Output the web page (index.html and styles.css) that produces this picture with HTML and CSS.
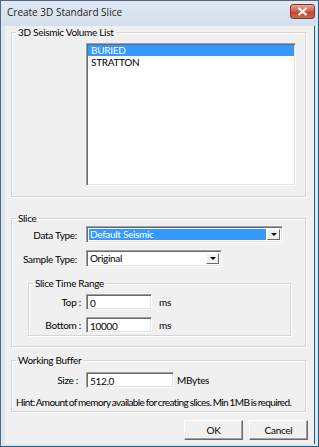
FILE: index.html
```html
<!DOCTYPE html>
<html lang="en">
<head>
  <meta charset="UTF-8" />
  <title>Create 3D Standard Slice</title>
  <link rel="stylesheet" href="styles.css">
</head>
<body>
  <div class="window">
    <div class="titlebar">
      <span class="title">Create 3D Standard Slice</span>
      <span class="close">
        <svg width="11" height="9" viewBox="0 0 11 9"><path d="M1.5 1 L9.5 8 M9.5 1 L1.5 8" stroke="#fff" stroke-width="2.2"/></svg>
      </span>
    </div>
    <div class="client">
      <fieldset class="group list-group">
        <legend>3D Seismic Volume List</legend>
        <ul class="listbox">
          <li class="sel">BURIED</li>
          <li>STRATTON</li>
        </ul>
      </fieldset>

      <fieldset class="group slice-group">
        <legend>Slice</legend>
        <div class="row">
          <label class="lbl">Data Type:</label>
          <div class="combo combo-data">
            <span class="combo-text sel">Default Seismic</span>
            <span class="combo-btn"><i></i></span>
          </div>
        </div>
        <div class="row row-sample">
          <label class="lbl">Sample Type:</label>
          <div class="combo combo-sample">
            <span class="combo-text">Original</span>
            <span class="combo-btn"><i></i></span>
          </div>
        </div>

        <fieldset class="group range-group">
          <legend>Slice Time Range</legend>
          <div class="row">
            <label class="lbl">Top :</label>
            <span class="edit edit-ms">0</span>
            <span class="unit">ms</span>
          </div>
          <div class="row row-bottom">
            <label class="lbl">Bottom :</label>
            <span class="edit edit-ms">10000</span>
            <span class="unit">ms</span>
          </div>
        </fieldset>
      </fieldset>

      <fieldset class="group buffer-group">
        <legend>Working Buffer</legend>
        <div class="row">
          <label class="lbl">Size :</label>
          <span class="edit edit-size">512.0</span>
          <span class="unit unit-mb">MBytes</span>
        </div>
        <p class="hint">Hint: Amount of memory available for creating slices. Min 1MB is required.</p>
      </fieldset>

      <div class="buttons">
        <button class="btn">OK</button>
        <button class="btn">Cancel</button>
      </div>
    </div>
  </div>
</body>
</html>
```

FILE: styles.css
```css
body {
  margin: 0;
  padding: 0;
  background: #f0f0f0;
  font-family: Lato, 'Liberation Sans', Arial, sans-serif;
  font-size: 10px;
  letter-spacing: -0.3px;
  color: #000;
}
.window {
  width: 319px;
  height: 447px;
  box-sizing: border-box;
  border: 1px solid #55677c;
  border-right-color: #2a5d78;
  border-bottom-color: #2a5d78;
  background: #dbe6f2;
  padding: 0 2px 2px 4px;
  display: flex;
  flex-direction: column;
  overflow: hidden;
}
.titlebar {
  flex-shrink: 0;
  height: 25px;
  display: flex;
  align-items: flex-start;
  justify-content: space-between;
  background: linear-gradient(#dfe8f3, #d3dfed);
  margin-left: -3px;
  margin-right: -1px;
  padding-left: 5px;
}
.title {
  font-family: 'Open Sans', 'Noto Sans', sans-serif;
  font-size: 10px;
  letter-spacing: 0;
  line-height: 14px;
  margin-top: 4px;
  color: #1e1e1e;
}
.close {
  width: 23px;
  height: 13px;
  margin-top: 3px;
  margin-right: 2px;
  border: 1px solid #7a3a34;
  border-radius: 3px;
  background: linear-gradient(#e6a89e, #cf5a47 50%, #c0402c 51%, #d06a50);
  display: flex;
  align-items: center;
  justify-content: center;
}
.close svg { display: block; }
.client {
  flex: 1;
  background: #f0f0f0;
  padding-left: 6px;
  border-right: 1px solid #2a5d78;
  margin-right: 1px;
}
.group {
  margin: 0;
  border: 1px solid #d5d5d5;
  box-shadow: inset 1px 1px #fff, 1px 1px #fff;
  box-sizing: border-box;
  width: 295px;
  min-width: 0;
}
.group legend {
  padding: 0 2px;
  margin-left: 4px;
  line-height: 13px;
}
.list-group {
  padding: 4px 0 10px 0;
}
.listbox {
  list-style: none;
  margin: 0 0 0 74px;
  padding: 1px 0 0 0;
  width: 210px;
  height: 143px;
  box-sizing: border-box;
  background: #fff;
  border-top: 1px solid #a0a0a0;
  border-left: 1px solid #a0a0a0;
  border-right: 1px solid #fff;
  border-bottom: 1px solid #fff;
  box-shadow: inset 1px 1px #696969, inset -1px -1px #e3e3e3;
}
.listbox li {
  line-height: 11px;
  height: 11px;
  padding-left: 3px;
  margin-left: 1px;
  margin-right: 1px;
  margin-bottom: 1px;
}
.sel {
  background: #3399ff;
  color: #fff;
}
.slice-group {
  margin-top: 15px;
  padding: 1px 0 10px 0;
}
.row {
  display: flex;
  align-items: center;
  white-space: nowrap;
}
.lbl {
  width: 65px;
  text-align: right;
  margin-right: 9px;
}
.row-sample { margin-top: 7px; }
.combo {
  height: 17px;
  box-sizing: border-box;
  background: #fff;
  border-top: 1px solid #a0a0a0;
  border-left: 1px solid #a0a0a0;
  border-right: 1px solid #fff;
  border-bottom: 1px solid #fff;
  box-shadow: inset 1px 1px #696969, inset -1px -1px #e3e3e3;
  padding: 2px;
  display: flex;
}
.combo-data { width: 197px; }
.combo-sample { width: 136px; }
.combo-text {
  flex: 1;
  line-height: 11px;
  padding-left: 1px;
  margin-right: 1px;
}
.combo-btn {
  width: 13px;
  height: 11px;
  box-sizing: border-box;
  background: #f0f0f0;
  border-top: 1px solid #fff;
  border-left: 1px solid #fff;
  border-right: 1px solid #696969;
  border-bottom: 1px solid #696969;
  display: flex;
  align-items: center;
  justify-content: center;
}
.combo-btn i {
  width: 0;
  height: 0;
  border-left: 3px solid transparent;
  border-right: 3px solid transparent;
  border-top: 3px solid #000;
}
.range-group {
  width: 263px;
  margin: 10px 0 0 16px;
  padding: 4px 0 2px 0;
}
.range-group .lbl {
  width: 52px;
  margin-right: 5px;
}
.row-bottom { margin-top: 7px; }
.edit {
  height: 16px;
  box-sizing: border-box;
  background: #fff;
  border-top: 1px solid #a0a0a0;
  border-left: 1px solid #a0a0a0;
  border-right: 1px solid #fff;
  border-bottom: 1px solid #fff;
  box-shadow: inset 1px 1px #696969, inset -1px -1px #e3e3e3;
  padding: 2px 2px 0 3px;
  line-height: 12px;
}
.edit-ms { width: 66px; }
.edit-size { width: 88px; }
.unit { margin-left: 7px; }
.unit-mb { margin-left: 3px; }
.buffer-group {
  margin-top: 7px;
  padding: 5px 0 2px 0;
}
.buffer-group .lbl {
  width: 66px;
  margin-right: 8px;
}
.hint {
  margin: 8px 0 0 4px;
  line-height: 13px;
  white-space: nowrap;
  letter-spacing: -0.6px;
  word-spacing: -0.5px;
}
.buttons {
  display: flex;
  justify-content: flex-end;
  gap: 6px;
  width: 297px;
  margin-top: 8px;
}
.btn {
  width: 59px;
  height: 20px;
  font-family: Lato, 'Liberation Sans', Arial, sans-serif;
  font-size: 10px;
  letter-spacing: -0.3px;
  color: #000;
  background: #f0f0f0;
  border-top: 1px solid #fff;
  border-left: 1px solid #fff;
  border-right: 1px solid #696969;
  border-bottom: 1px solid #696969;
  box-shadow: inset -1px -1px #a0a0a0;
  padding: 0;
}
```
